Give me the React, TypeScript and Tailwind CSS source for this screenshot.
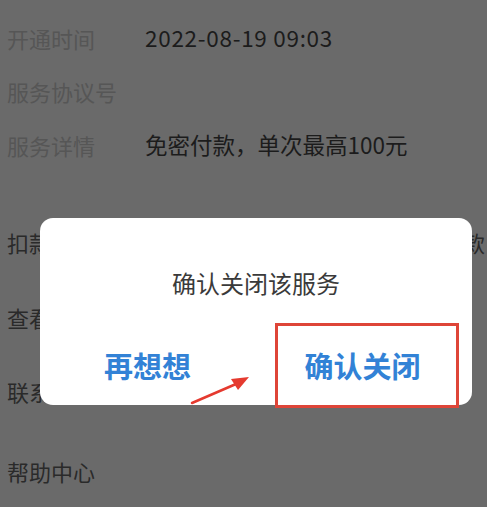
import React from 'react';

const font = { fontFamily: '"Noto Sans CJK SC", "Noto Sans", sans-serif' };

const Row = ({ label, value, h, vc = '' }: { label: string; value?: string; h: string; vc?: string }) => (
  <div className={`flex items-center ${h}`}>
    <span className="w-[138px] shrink-0 text-[22px] text-[#565656]">{label}</span>
    {value && <span className={`text-[22.5px] text-[#1c1c1c] ${vc}`}>{value}</span>}
  </div>
);

export default function App() {
  return (
    <div className="relative w-[487px] h-[507px] overflow-hidden bg-[#6a6a6a]" style={font}>
      <div className="pl-[7px] pt-[11px]">
        <Row label="开通时间" value="2022-08-19 09:03" h="h-[54px]" vc="tracking-[0.7px]" />
        <Row label="服务协议号" h="h-[53px]" />
        <Row label="服务详情" value="免密付款，单次最高100元" h="h-[54px]" />
        <div className="h-[31px]" />
        <div className="flex items-center justify-between h-[78px] pr-[2px]">
          <span className="text-[22px] text-[#2a2a2a]">扣款顺序</span>
          <span className="text-[22px] text-[#2a2a2a]">款</span>
        </div>
        <div className="flex items-center h-[72px]">
          <span className="text-[22px] text-[#2a2a2a]">查看账单</span>
        </div>
        <div className="flex items-center h-[76px]">
          <span className="text-[22px] text-[#2a2a2a]">联系商家</span>
        </div>
        <div className="flex items-center h-[84px]">
          <span className="text-[22px] text-[#2a2a2a]">帮助中心</span>
        </div>
      </div>

      {/* dialog */}
      <div className="absolute left-[40px] top-[218px] w-[432px] h-[187px] rounded-[13px] bg-white">
        <div className="flex justify-center pt-[53px] text-[24px] text-[#3a3a3a] leading-none">
          确认关闭该服务
        </div>
        <div className="flex mt-[56px]">
          <div className="w-[215px] flex justify-center text-[29px] font-bold text-[#3282d6] leading-none">
            再想想
          </div>
          <div className="flex-1 flex justify-center text-[29px] font-bold text-[#3282d6] leading-none pr-[2px]">
            确认关闭
          </div>
        </div>
      </div>

      {/* highlight box */}
      <div className="absolute left-[275px] top-[323px] w-[184px] h-[85px] border-[3px] border-[#de4538]" />

      {/* arrow */}
      <svg className="absolute left-0 top-0" width="487" height="507" viewBox="0 0 487 507">
        <line x1="192" y1="403" x2="236" y2="384" stroke="#e53a2f" strokeWidth="2.5" strokeLinecap="round" />
        <polygon points="249,377 231,379 238,390" fill="#e53a2f" />
      </svg>
    </div>
  );
}
